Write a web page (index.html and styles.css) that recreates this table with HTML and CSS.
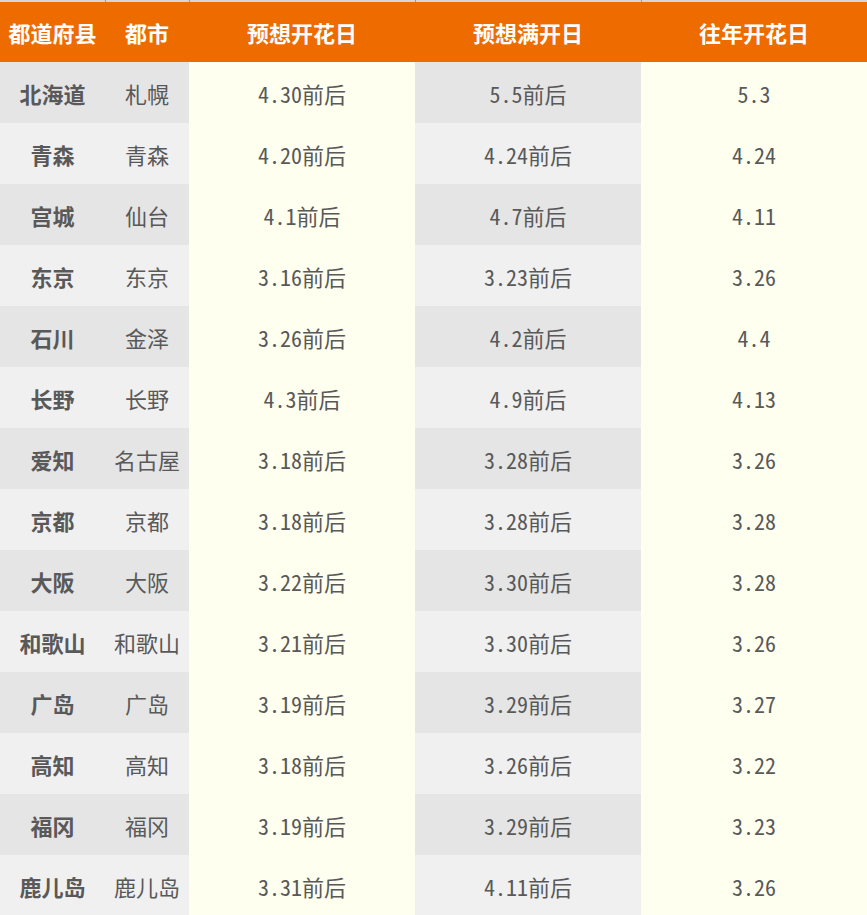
FILE: index.html
```html
<!DOCTYPE html>
<html lang="zh">
<head>
<meta charset="utf-8">
<title>樱花开花预想</title>
<link rel="stylesheet" href="styles.css">
</head>
<body>
<table class="sakura">
  <colgroup>
    <col class="c-pref">
    <col class="c-city">
    <col class="c-date">
    <col class="c-date">
    <col class="c-date">
  </colgroup>
  <thead>
    <tr class="top-strip"><td></td><td></td><td></td><td></td><td></td></tr>
    <tr class="head">
      <th>都道府县</th><th>都市</th><th>预想开花日</th><th>预想满开日</th><th>往年开花日</th>
    </tr>
  </thead>
  <tbody>
    <tr><td class="pref">北海道</td><td class="city">札幌</td><td class="cream">4.30前后</td><td class="grey">5.5前后</td><td class="cream">5.3</td></tr>
    <tr><td class="pref">青森</td><td class="city">青森</td><td class="cream">4.20前后</td><td class="grey">4.24前后</td><td class="cream">4.24</td></tr>
    <tr><td class="pref">宫城</td><td class="city">仙台</td><td class="cream">4.1前后</td><td class="grey">4.7前后</td><td class="cream">4.11</td></tr>
    <tr><td class="pref">东京</td><td class="city">东京</td><td class="cream">3.16前后</td><td class="grey">3.23前后</td><td class="cream">3.26</td></tr>
    <tr><td class="pref">石川</td><td class="city">金泽</td><td class="cream">3.26前后</td><td class="grey">4.2前后</td><td class="cream">4.4</td></tr>
    <tr><td class="pref">长野</td><td class="city">长野</td><td class="cream">4.3前后</td><td class="grey">4.9前后</td><td class="cream">4.13</td></tr>
    <tr><td class="pref">爱知</td><td class="city">名古屋</td><td class="cream">3.18前后</td><td class="grey">3.28前后</td><td class="cream">3.26</td></tr>
    <tr><td class="pref">京都</td><td class="city">京都</td><td class="cream">3.18前后</td><td class="grey">3.28前后</td><td class="cream">3.28</td></tr>
    <tr><td class="pref">大阪</td><td class="city">大阪</td><td class="cream">3.22前后</td><td class="grey">3.30前后</td><td class="cream">3.28</td></tr>
    <tr><td class="pref">和歌山</td><td class="city">和歌山</td><td class="cream">3.21前后</td><td class="grey">3.30前后</td><td class="cream">3.26</td></tr>
    <tr><td class="pref">广岛</td><td class="city">广岛</td><td class="cream">3.19前后</td><td class="grey">3.29前后</td><td class="cream">3.27</td></tr>
    <tr><td class="pref">高知</td><td class="city">高知</td><td class="cream">3.18前后</td><td class="grey">3.26前后</td><td class="cream">3.22</td></tr>
    <tr><td class="pref">福冈</td><td class="city">福冈</td><td class="cream">3.19前后</td><td class="grey">3.29前后</td><td class="cream">3.23</td></tr>
    <tr><td class="pref">鹿儿岛</td><td class="city">鹿儿岛</td><td class="cream">3.31前后</td><td class="grey">4.11前后</td><td class="cream">3.26</td></tr>
  </tbody>
</table>
</body>
</html>
```
FILE: styles.css
```css
html, body {
  margin: 0;
  padding: 0;
  background: #ffffff;
}

.sakura {
  width: 867px;
  border-collapse: collapse;
  table-layout: fixed;
  font-family: "Noto Sans Mono CJK SC", "DejaVu Sans Mono", "Noto Sans CJK SC", monospace;
  font-size: 22px;
  color: #595959;
}

.c-pref { width: 105px; }
.c-city { width: 84px; }
.c-date { width: 226px; }

.top-strip td {
  height: 2px;
  padding: 0;
  background: #d6d6d6;
  border-left: 1px solid #9a9a9a;
}
.top-strip td:first-child {
  border-left: none;
}

.head th {
  height: 60px;
  padding: 0;
  background: #ee6b00;
  color: #ffffff;
  font-family: "Noto Sans CJK SC", sans-serif;
  font-weight: 700;
  font-size: 22px;
  text-align: center;
  vertical-align: middle;
}

tbody td {
  height: 61px;
  padding: 0;
  text-align: center;
  vertical-align: middle;
  white-space: nowrap;
}

tbody tr:nth-child(odd) td { background: #e5e5e5; }
tbody tr:nth-child(even) td { background: #f0f0f0; }

tbody tr td.cream { background: #fffff0; }

.pref {
  font-family: "Noto Sans CJK SC", sans-serif;
  font-weight: 700;
}

.city {
  font-family: "Noto Sans CJK SC", sans-serif;
}
```
